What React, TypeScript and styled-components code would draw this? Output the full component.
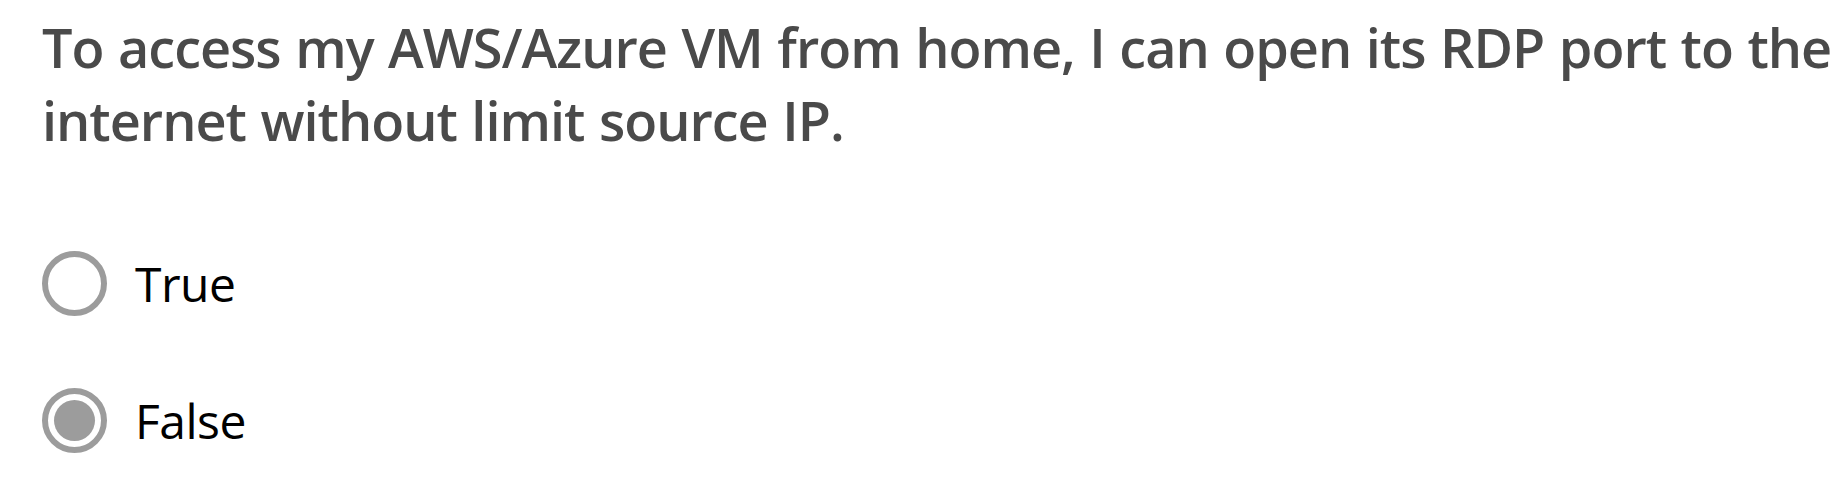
import React from "react";
import styled, { createGlobalStyle } from "styled-components";

const Global = createGlobalStyle`
  html, body { margin: 0; padding: 0; background: #ffffff; }
  body { font-family: "Open Sans", "Liberation Sans", sans-serif; }
`;

const Page = styled.div`
  padding: 11px 0 0 42px;
  width: 1842px;
  box-sizing: border-box;
`;

const Question = styled.h2`
  margin: 0;
  font-family: "Open Sans", "Liberation Sans", sans-serif;
  font-weight: 600;
  font-size: 54px;
  letter-spacing: -1px;
  word-spacing: 1.5px;
  line-height: 73px;
  color: #4a4a4a;
  white-space: nowrap;
`;

const Options = styled.div`
  display: flex;
  flex-direction: column;
  gap: 72px;
  margin-top: 94px;
`;

const Option = styled.label`
  display: flex;
  align-items: center;
  gap: 28px;
  font-family: "Open Sans", "Liberation Sans", sans-serif;
  font-size: 48px;
  letter-spacing: -0.5px;
  color: #000;
  line-height: 64px;
`;

const Radio = styled.span<{ $checked?: boolean }>`
  width: 65px;
  height: 65px;
  box-sizing: border-box;
  border-radius: 50%;
  border: 6px solid #9c9c9c;
  display: flex;
  align-items: center;
  justify-content: center;
  flex-shrink: 0;
  &::after {
    content: "";
    width: 41px;
    height: 41px;
    border-radius: 50%;
    background: #9c9c9c;
    display: ${(p) => (p.$checked ? "block" : "none")};
  }
`;

export default function App() {
  return (
    <Page>
      <Global />
      <Question>
        To access my AWS/Azure VM from home, I can open its RDP port to the
        <br />
        internet without limit source IP.
      </Question>
      <Options>
        <Option>
          <Radio />
          True
        </Option>
        <Option>
          <Radio $checked />
          False
        </Option>
      </Options>
    </Page>
  );
}
